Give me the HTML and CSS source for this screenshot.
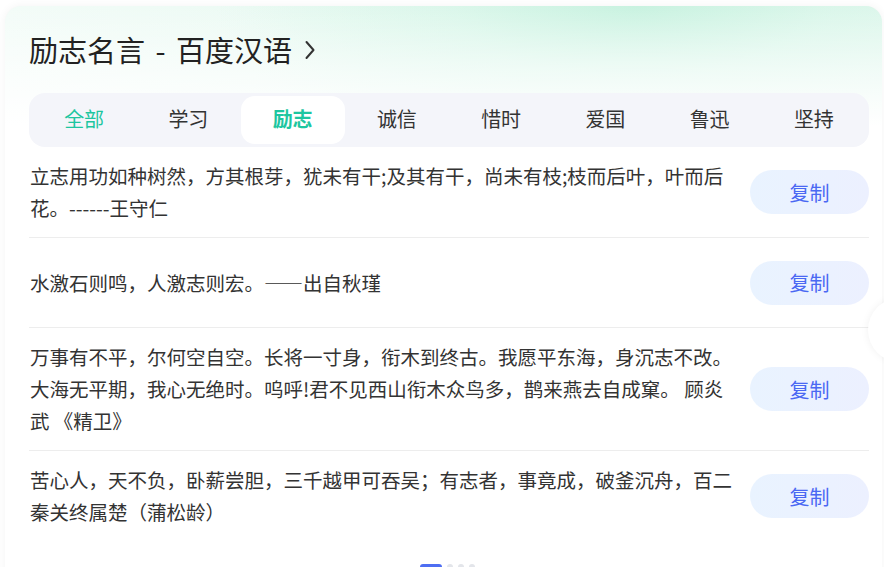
FILE: index.html
```html
<!DOCTYPE html>
<html lang="zh-CN">
<head>
<meta charset="utf-8">
<title>励志名言 - 百度汉语</title>
<link rel="stylesheet" href="styles.css">
</head>
<body>
<div class="card">
  <div class="title">
    <span class="title-text">励志名言 - 百度汉语</span>
    <svg class="chev" width="10" height="20" viewBox="0 0 10 20"><polyline points="1.5,2 8.5,10 1.5,18" fill="none" stroke="#333" stroke-width="2" stroke-linecap="round" stroke-linejoin="round"/></svg>
  </div>
  <div class="tabs">
    <div class="tab tab-green">全部</div>
    <div class="tab">学习</div>
    <div class="tab tab-active">励志</div>
    <div class="tab">诚信</div>
    <div class="tab">惜时</div>
    <div class="tab">爱国</div>
    <div class="tab">鲁迅</div>
    <div class="tab">坚持</div>
  </div>
  <div class="list">
    <div class="row">
      <div class="quote">立志用功如种树然，方其根芽，犹未有干;及其有干，尚未有枝;枝而后叶，叶而后花。------王守仁</div>
      <div class="btn">复制</div>
    </div>
    <div class="row">
      <div class="quote">水激石则鸣，人激志则宏。——出自秋瑾</div>
      <div class="btn">复制</div>
    </div>
    <div class="row">
      <div class="quote">万事有不平，尔何空自空。长将一寸身，衔木到终古。我愿平东海，身沉志不改。大海无平期，我心无绝时。呜呼!君不见西山衔木众鸟多，鹊来燕去自成窠。 顾炎武 《精卫》</div>
      <div class="btn">复制</div>
    </div>
    <div class="row row-last">
      <div class="quote">苦心人，天不负，卧薪尝胆，三千越甲可吞吴；有志者，事竟成，破釜沉舟，百二秦关终属楚（蒲松龄）</div>
      <div class="btn">复制</div>
    </div>
  </div>
  <div class="dots">
    <span class="dot dot-on"></span>
    <span class="dot"></span>
    <span class="dot"></span>
    <span class="dot"></span>
  </div>
</div>
<div class="side-btn"></div>
</body>
</html>
```

FILE: styles.css
```css
html, body {
  margin: 0;
  padding: 0;
  background: #fff;
  overflow: hidden;
  height: 567px;
}
body {
  font-family: "Noto Sans CJK SC", "Noto Sans", sans-serif;
  color: #333;
  position: relative;
}
.card {
  box-sizing: border-box;
  width: 877px;
  margin: 6px 0 0 5px;
  padding: 0 13px 0 24px;
  border-radius: 16px 16px 0 0;
  background:
    linear-gradient(180deg, rgba(255,255,255,0) 0, rgba(255,255,255,0.55) 60px, #fff 120px),
    radial-gradient(ellipse 420px 160px at 72% 0, #c8f2e0 0, rgba(214,246,232,0.7) 45%, rgba(240,252,246,0) 100%),
    linear-gradient(90deg, #f3fcf8 0, #e4f8ef 60%, #e2f7ee 100%);
  background-repeat: no-repeat;
  background-size: 100% 160px, 100% 160px, 100% 160px;
  background-color: #fff;
  box-shadow: 0 0 10px rgba(0,0,0,0.05);
  min-height: 580px;
}
.title {
  display: flex;
  align-items: center;
  gap: 13px;
  padding-top: 23px;
  height: 40px;
  margin-bottom: 24px;
}
.title-text {
  font-size: 29px;
  line-height: 40px;
  color: #222;
  word-spacing: 4px;
}
.chev {
  display: block;
  margin-top: 1px;
}
.tabs {
  display: grid;
  grid-template-columns: repeat(8, 1fr);
  padding: 3px;
  height: 54px;
  box-sizing: border-box;
  background: #f4f5fa;
  border-radius: 16px;
}
.tab {
  display: flex;
  align-items: center;
  justify-content: center;
  font-size: 20px;
  line-height: 46px;
  padding-bottom: 2px;
  color: #333;
  border-radius: 14px;
}
.tab-green {
  color: #1dc6a0;
}
.tab-active {
  background: #fff;
  color: #1dc6a0;
  font-weight: 700;
}
.list {
  display: flex;
  flex-direction: column;
}
.row {
  box-sizing: border-box;
  display: flex;
  align-items: center;
  gap: 14px;
  min-height: 90px;
  padding: 13px 0;
  border-bottom: 1px solid #ededed;
}
.row-last {
  border-bottom: none;
}
.quote {
  flex: 1;
  padding-left: 1px;
  font-size: 19.5px;
  line-height: 32px;
  color: #333;
}
.btn {
  flex-shrink: 0;
  width: 119px;
  height: 44px;
  border-radius: 22px;
  background: linear-gradient(90deg, #e9f3ff 0, #ecf0ff 100%);
  color: #4a68f3;
  font-size: 20px;
  display: flex;
  align-items: center;
  justify-content: center;
}
.dots {
  display: flex;
  justify-content: center;
  gap: 5px;
  margin-top: 23px;
  padding-right: 4px;
}
.dot {
  width: 6px;
  height: 6px;
  border-radius: 3px;
  background: #e3e5ea;
}
.dot-on {
  width: 22px;
  background: #4e6ef2;
}
.side-btn {
  position: absolute;
  left: 868px;
  top: 298px;
  width: 64px;
  height: 64px;
  border-radius: 50%;
  background: #fff;
  box-shadow: 0 0 8px rgba(0,0,0,0.06);
}
```
